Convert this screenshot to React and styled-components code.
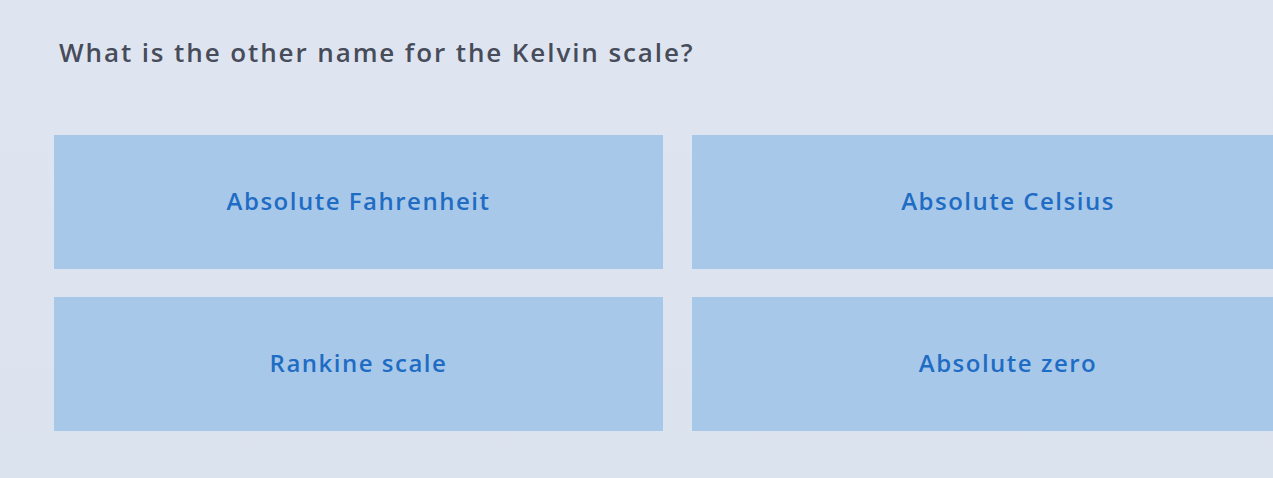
import React from 'react';
import styled, { createGlobalStyle } from 'styled-components';

const Global = createGlobalStyle`
  html, body {
    margin: 0;
    height: 100%;
    overflow: hidden;
    background: #dde4ef;
  }
`;

const Page = styled.main`
  width: 1273px;
  height: 478px;
  padding: 36px 0 0 54px;
  box-sizing: border-box;
  font-family: "Open Sans", Roboto, "Liberation Sans", sans-serif;
  background: linear-gradient(180deg, #dfe5f0 0%, #dbe3ef 100%);
`;

const Question = styled.h1`
  margin: 0 0 0 5px;
  font-size: 26px;
  font-weight: 600;
  line-height: 32px;
  color: #474c5a;
  letter-spacing: 1.9px;
`;

const Grid = styled.div`
  display: grid;
  grid-template-columns: 609px 632px;
  grid-auto-rows: 134px;
  column-gap: 29px;
  row-gap: 28px;
  margin-top: 67px;
  width: max-content;
`;

const Option = styled.button`
  display: flex;
  align-items: center;
  justify-content: center;
  border: none;
  margin: 0;
  padding: 0 0 4px;
  background: #a8c8e9;
  color: #1f6cc4;
  font-family: inherit;
  font-size: 24px;
  font-weight: 600;
  letter-spacing: 1.5px;
  cursor: pointer;
`;

const options = [
  'Absolute Fahrenheit',
  'Absolute Celsius',
  'Rankine scale',
  'Absolute zero',
];

export default function App() {
  return (
    <Page>
      <Global />
      <Question>What is the other name for the Kelvin scale?</Question>
      <Grid>
        {options.map((o) => (
          <Option key={o}>{o}</Option>
        ))}
      </Grid>
    </Page>
  );
}
